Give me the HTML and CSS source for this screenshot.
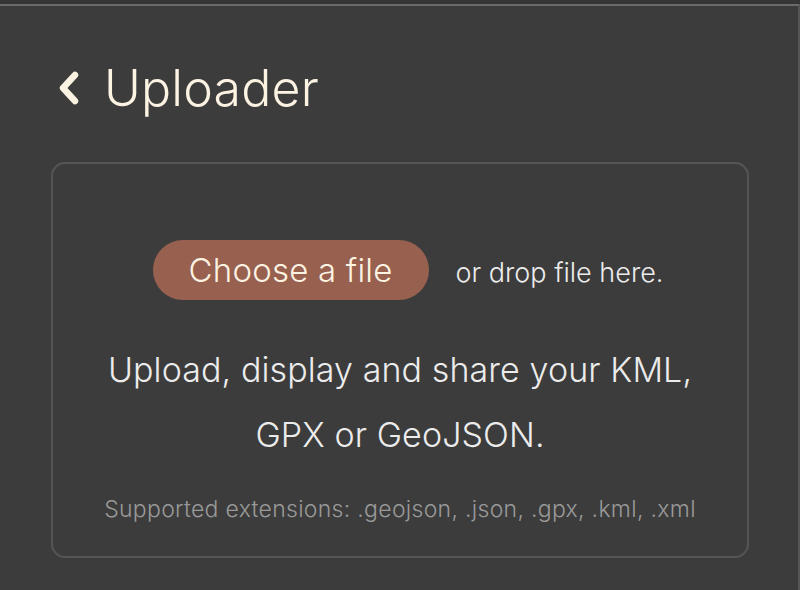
FILE: index.html
```html
<!DOCTYPE html>
<html>
<head>
<meta charset="utf-8">
<link rel="stylesheet" href="styles.css">
</head>
<body>
<div class="frame">
  <div class="page">
    <h1 class="title">
      <svg class="back" width="26" height="34" viewBox="0 0 26 34"><path d="M19 4 L7 17 L19 30" fill="none" stroke="currentColor" stroke-width="6.5" stroke-linecap="round" stroke-linejoin="round"/></svg>
      <span>Uploader</span>
    </h1>
    <div class="card">
      <div class="pick">
        <span class="btn">Choose a file</span>
        <span class="drop">or drop file here.</span>
      </div>
      <p class="desc">Upload, display and share your KML,<br>GPX or GeoJSON.</p>
      <p class="ext">Supported extensions: .geojson, .json, .gpx, .kml, .xml</p>
    </div>
  </div>
</div>
</body>
</html>
```
FILE: styles.css
```css
html, body {
  margin: 0;
  padding: 0;
  background: #3c3c3c;
  height: 100%;
}
body {
  font-family: Inter, "Noto Sans", sans-serif;
  overflow: hidden;
}
.frame {
  border-top: 4px solid #353535;
  height: 100%;
  box-sizing: border-box;
}
.page {
  border-top: 2px solid #6a6a6a;
  border-right: 2px solid #555;
  height: 100%;
  box-sizing: border-box;
  padding: 0 49px 0 51px;
}
.title {
  margin: 0;
  padding-top: 52px;
  height: 60px;
  display: flex;
  align-items: center;
  gap: 22px;
  font-weight: 300;
  font-size: 50px;
  letter-spacing: 0.2px;
  color: #fdf3e3;
}
.back {
  margin-left: 5px;
  color: #fdf3e3;
}
.card {
  margin-top: 44px;
  border: 2px solid #555;
  border-radius: 14px;
  height: 396px;
  box-sizing: border-box;
  display: flex;
  flex-direction: column;
  align-items: center;
  padding-top: 76px;
  color: #ececec;
}
.pick {
  display: flex;
  align-items: center;
  gap: 27px;
  margin-left: 16px;
}
.btn {
  background: #98614f;
  color: #fdf3e3;
  border-radius: 30px;
  height: 60px;
  padding: 0 36px;
  display: flex;
  align-items: center;
  font-size: 33px;
  font-weight: 350;
  letter-spacing: 0.2px;
}
.drop {
  font-size: 27px;
  font-weight: 350;
  margin-top: 4px;
}
.desc {
  margin: 37px 0 0;
  font-size: 34px;
  font-weight: 350;
  line-height: 65px;
  letter-spacing: 0.1px;
  text-align: center;
}
.ext {
  margin: 28px 0 0;
  font-size: 23px;
  font-weight: 350;
  letter-spacing: 0.3px;
  color: #999;
}
```
